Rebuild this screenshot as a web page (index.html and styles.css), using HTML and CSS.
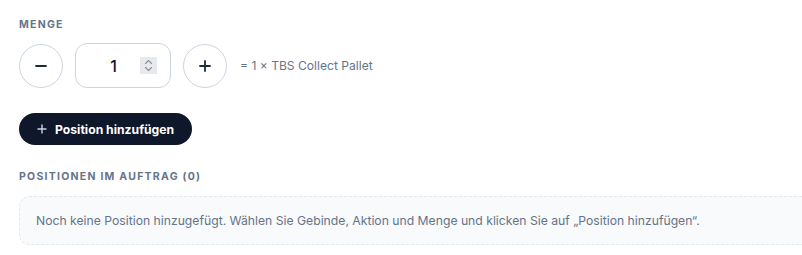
FILE: index.html
```html
<!DOCTYPE html>
<html lang="de">

<head>
    <meta charset="UTF-8">
    <title>Menge</title>
    <link rel="stylesheet" href="styles.css">
</head>

<body>
    <div class="panel">
        <!-- Menge -->
        <div class="feld">
            <div class="label">Menge</div>
            <div class="menge">
                <button class="rund" type="button">
                    <svg width="14" height="14" viewBox="0 0 14 14"><path d="M2 7h10" stroke="#1e293b" stroke-width="1.8" stroke-linecap="round"/></svg>
                </button>
                <div class="zahl">
                    <span class="wert">1</span>
                    <span class="spinner">
                        <svg width="9" height="13" viewBox="0 0 9 13"><path d="M1.5 4.5L4.5 1.5L7.5 4.5M1.5 8.5L4.5 11.5L7.5 8.5" fill="none" stroke="#8a8f9c" stroke-width="1.1" stroke-linecap="round" stroke-linejoin="round"/></svg>
                    </span>
                </div>
                <button class="rund" type="button">
                    <svg width="14" height="14" viewBox="0 0 14 14"><path d="M2 7h10M7 2v10" stroke="#1e293b" stroke-width="1.8" stroke-linecap="round"/></svg>
                </button>
                <span class="info">= 1 × TBS Collect Pallet</span>
            </div>
        </div>

        <button class="btn-add" type="button">
            <svg width="10" height="10" viewBox="0 0 10 10"><path d="M1 5h8M5 1v8" stroke="#cbd5e1" stroke-width="1.4" stroke-linecap="round"/></svg>
            Position hinzufügen
        </button>

        <!-- Positionen -->
        <div class="label">Positionen im Auftrag (0)</div>
        <div class="leer">Noch keine Position hinzugefügt. Wählen Sie Gebinde, Aktion und Menge und klicken Sie auf „Position hinzufügen“.</div>
    </div>
</body>

</html>
```

FILE: styles.css
```css
body {
    margin: 0;
    font-family: Inter, "Noto Sans", sans-serif;
    background: #fff;
    color: #0f172a;
    overflow: hidden;
}

.panel {
    width: 830px;
    padding: 18px 0 0 19px;
}

.label {
    font-size: 10.5px;
    font-weight: 700;
    letter-spacing: 1.25px;
    text-transform: uppercase;
    color: #64748b;
    line-height: 14px;
}

.menge {
    display: flex;
    align-items: center;
    gap: 12px;
    margin-top: 11px;
}

.rund {
    width: 44px;
    height: 44px;
    border-radius: 50%;
    border: 1px solid #cbd5e1;
    background: #fff;
    display: flex;
    align-items: center;
    justify-content: center;
    padding: 0;
}

.zahl {
    width: 96px;
    height: 45px;
    box-sizing: border-box;
    border: 1px solid #cbd5e1;
    border-radius: 12px;
    display: flex;
    align-items: center;
    justify-content: flex-end;
    padding-right: 13px;
}

.wert {
    font-size: 16px;
    font-weight: 500;
    margin-right: 23px;
}

.spinner {
    width: 17px;
    height: 17px;
    background: #e8e9ee;
    display: flex;
    align-items: center;
    justify-content: center;
}

.info {
    font-size: 12.1px;
    color: #64748b;
    margin-left: 1px;
}

.btn-add {
    display: flex;
    align-items: center;
    gap: 8px;
    margin: 25px 0 25px;
    height: 32px;
    padding: 0 18px 0 18px;
    border: none;
    border-radius: 16px;
    background: #0f172a;
    color: #fff;
    font-family: inherit;
    font-size: 12.2px;
    font-weight: 700;
}

.leer {
    margin-top: 12px;
    height: 49px;
    box-sizing: border-box;
    border: 1px dashed #e2e8f0;
    border-radius: 10px;
    background: #f8fafc;
    display: flex;
    align-items: center;
    padding-left: 16px;
    font-size: 12.2px;
    color: #64748b;
}
```
